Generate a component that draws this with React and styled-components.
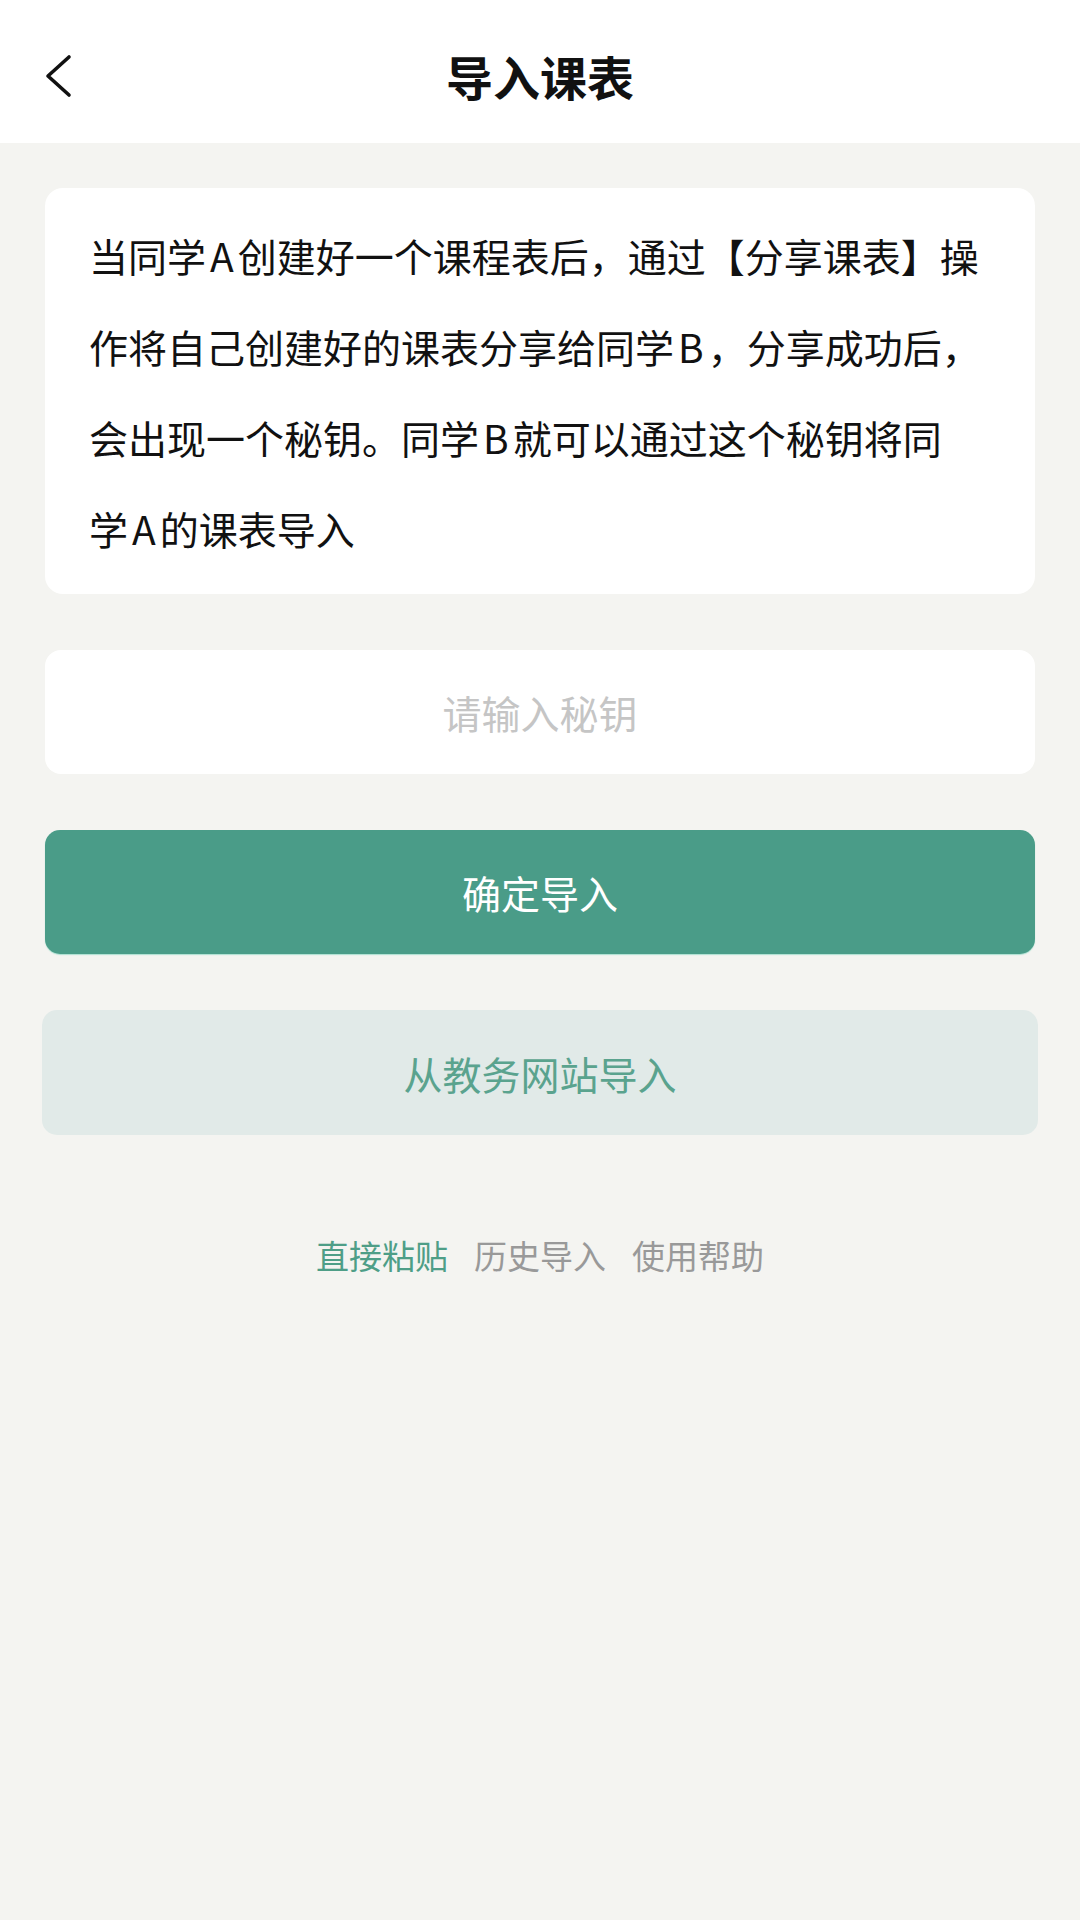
import React from 'react'
import styled, { createGlobalStyle } from 'styled-components'

const GlobalStyle = createGlobalStyle`
  html, body {
    margin: 0;
    padding: 0;
    background: #f4f4f1;
  }
  body {
    font-family: "Noto Sans CJK SC", "Noto Sans", sans-serif;
    color: #111;
  }
`

const Page = styled.div`
  min-height: 1920px;
  background: #f4f4f1;
`

const Header = styled.header`
  height: 143px;
  box-sizing: border-box;
  padding-top: 8px;
  background: #fff;
  display: grid;
  grid-template-columns: 1fr auto 1fr;
  align-items: center;
`

const BackButton = styled.button`
  justify-self: start;
  background: none;
  border: none;
  padding: 0 0 0 44px;
  display: flex;
  cursor: pointer;
`

const Title = styled.h1`
  margin: 0;
  font-size: 47px;
  font-weight: 700;
  line-height: 60px;
  color: #111;
`

const Main = styled.main`
  padding: 45px 45px 0;
  display: flex;
  flex-direction: column;
  gap: 56px;
`

const Card = styled.div`
  background: #fff;
  border-radius: 18px;
  padding: 22px 40px 20px 44px;
`

const Intro = styled.p`
  margin: 0;
  font-size: 39px;
  line-height: 91px;
  color: #111;
`

const Latin = styled.span`
  margin: 0 4px;
`

const KeyInput = styled.input`
  height: 124px;
  box-sizing: border-box;
  border: none;
  border-radius: 16px;
  background: #fff;
  text-align: center;
  font-family: inherit;
  font-size: 39px;
  color: #111;
  outline: none;

  &::placeholder {
    color: #c5c5c5;
  }
`

const Button = styled.button`
  height: ${p => (p.$light ? 125 : 124)}px;
  margin: ${p => (p.$light ? '0 -3px' : '0')};
  border: none;
  border-radius: 15px;
  font-family: inherit;
  font-size: 39px;
  cursor: pointer;
  background: ${p => (p.$light ? '#e1eae8' : '#4a9c88')};
  color: ${p => (p.$light ? '#5aa38e' : '#fff')};
  box-shadow: ${p => (p.$light ? 'none' : '0 1px 1px rgba(140, 215, 195, 0.7)')};
`

const Links = styled.nav`
  margin-top: 44px;
  display: flex;
  justify-content: center;
  gap: 26px;
`

const LinkText = styled.a`
  font-size: 33px;
  line-height: 40px;
  color: ${p => (p.$active ? '#4e9e87' : '#999')};
  text-decoration: none;
  cursor: pointer;
`

const BackIcon = () => (
  <svg width="30" height="44" viewBox="0 0 30 44" fill="none">
    <path d="M25 3 L4 22 L25 41" stroke="#111" strokeWidth="3.6" strokeLinecap="round" strokeLinejoin="round" />
  </svg>
)

const App = () => {
  return (
    <Page>
      <GlobalStyle />
      <Header>
        <BackButton aria-label="返回"><BackIcon /></BackButton>
        <Title>导入课表</Title>
        <div />
      </Header>
      <Main>
        <Card>
          <Intro>
            当同学<Latin>A</Latin>创建好一个课程表后，通过【分享课表】操<br />
            作将自己创建好的课表分享给同学<Latin>B</Latin>，分享成功后，<br />
            会出现一个秘钥。同学<Latin>B</Latin>就可以通过这个秘钥将同<br />
            学<Latin>A</Latin>的课表导入
          </Intro>
        </Card>
        <KeyInput placeholder="请输入秘钥" />
        <Button>确定导入</Button>
        <Button $light>从教务网站导入</Button>
        <Links>
          <LinkText $active>直接粘贴</LinkText>
          <LinkText>历史导入</LinkText>
          <LinkText>使用帮助</LinkText>
        </Links>
      </Main>
    </Page>
  )
}

export default App
